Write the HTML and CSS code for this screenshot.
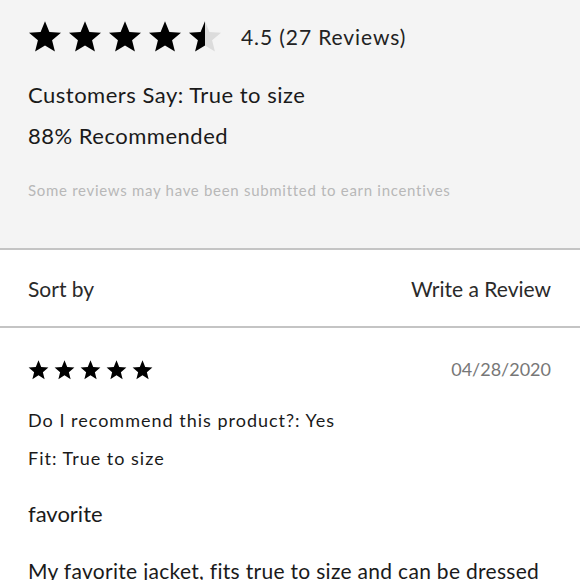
FILE: index.html
```html
<!DOCTYPE html>
<html lang="en">
<head>
    <meta charset="UTF-8">
    <meta name="viewport" content="width=device-width, initial-scale=1.0">
    <title>Reviews</title>
    <link rel="stylesheet" href="styles.css">
</head>
<body>
    <!-- summary -->
    <div id="summary">
        <div class="rating">
            <div class="stars big">
                <svg viewBox="0 0 24 24"><path d="M12 1.5l3.1 7.6 8.2.6-6.3 5.3 2 8-7-4.3-7 4.3 2-8L.7 9.7l8.2-.6z"/></svg>
                <svg viewBox="0 0 24 24"><path d="M12 1.5l3.1 7.6 8.2.6-6.3 5.3 2 8-7-4.3-7 4.3 2-8L.7 9.7l8.2-.6z"/></svg>
                <svg viewBox="0 0 24 24"><path d="M12 1.5l3.1 7.6 8.2.6-6.3 5.3 2 8-7-4.3-7 4.3 2-8L.7 9.7l8.2-.6z"/></svg>
                <svg viewBox="0 0 24 24"><path d="M12 1.5l3.1 7.6 8.2.6-6.3 5.3 2 8-7-4.3-7 4.3 2-8L.7 9.7l8.2-.6z"/></svg>
                <svg viewBox="0 0 24 24">
                    <path class="empty" d="M12 1.5l3.1 7.6 8.2.6-6.3 5.3 2 8-7-4.3-7 4.3 2-8L.7 9.7l8.2-.6z"/>
                    <path d="M12 1.5V18.7l-7 4.3 2-8L.7 9.7l8.2-.6z"/>
                </svg>
            </div>
            <span class="score">4.5 (27 Reviews)</span>
        </div>
        <div class="line first">Customers Say: True to size</div>
        <div class="line">88% Recommended</div>
        <div class="note">Some reviews may have been submitted to earn incentives</div>
    </div>

    <!-- sort bar -->
    <div id="toolbar">
        <span>Sort by</span>
        <span>Write a Review</span>
    </div>

    <!-- review -->
    <div class="review">
        <div class="review-head">
            <div class="stars small">
                <svg viewBox="0 0 24 24"><path d="M12 1.5l3.1 7.6 8.2.6-6.3 5.3 2 8-7-4.3-7 4.3 2-8L.7 9.7l8.2-.6z"/></svg>
                <svg viewBox="0 0 24 24"><path d="M12 1.5l3.1 7.6 8.2.6-6.3 5.3 2 8-7-4.3-7 4.3 2-8L.7 9.7l8.2-.6z"/></svg>
                <svg viewBox="0 0 24 24"><path d="M12 1.5l3.1 7.6 8.2.6-6.3 5.3 2 8-7-4.3-7 4.3 2-8L.7 9.7l8.2-.6z"/></svg>
                <svg viewBox="0 0 24 24"><path d="M12 1.5l3.1 7.6 8.2.6-6.3 5.3 2 8-7-4.3-7 4.3 2-8L.7 9.7l8.2-.6z"/></svg>
                <svg viewBox="0 0 24 24"><path d="M12 1.5l3.1 7.6 8.2.6-6.3 5.3 2 8-7-4.3-7 4.3 2-8L.7 9.7l8.2-.6z"/></svg>
            </div>
            <span class="date">04/28/2020</span>
        </div>
        <div class="meta first">Do I recommend this product?: Yes</div>
        <div class="meta">Fit: True to size</div>
        <h2>favorite</h2>
        <p>My favorite jacket, fits true to size and can be dressed</p>
    </div>
</body>
</html>
```
FILE: styles.css
```css
body {
    margin: 0;
    font-family: Lato, "Noto Sans", sans-serif;
    color: #1a1a1a;
    background-color: white;
    overflow: hidden;
}

#summary {
    background-color: #f4f4f4;
    padding: 19px 28px 0;
    height: 229px;
    border-bottom: 2px solid #c4c4c4;
}

.rating {
    display: flex;
    align-items: center;
    height: 34px;
}

.stars {
    display: flex;
}

.stars svg {
    fill: #000;
}

.stars .empty {
    fill: #dcdcdc;
}

.stars.big {
    gap: 6px;
}

.stars.big svg {
    width: 34px;
    height: 34px;
}

.stars.small {
    gap: 5px;
}

.stars.small svg {
    width: 21px;
    height: 21px;
}

.score {
    margin-left: 19px;
    font-size: 21px;
    letter-spacing: 0.9px;
    color: #222;
}

.line {
    font-size: 22px;
    line-height: 28px;
    letter-spacing: 0.5px;
    margin-top: 13px;
}

.line.first {
    margin-top: 28px;
}

.note {
    margin-top: 30px;
    font-size: 15px;
    line-height: 20px;
    letter-spacing: 0.7px;
    color: #b8b8b8;
}

#toolbar {
    display: flex;
    justify-content: space-between;
    align-items: center;
    height: 76px;
    padding: 0 29px 0 28px;
    font-size: 21px;
    color: #2a2a2a;
    border-bottom: 2px solid #c4c4c4;
}

.review {
    padding: 30px 29px 0 28px;
}

.review-head {
    display: flex;
    justify-content: space-between;
    align-items: center;
}

.date {
    font-size: 18px;
    color: #777;
}

.meta {
    font-size: 18px;
    line-height: 22px;
    letter-spacing: 1px;
    margin-top: 16px;
}

.meta.first {
    margin-top: 29px;
}

.review h2 {
    font-size: 22px;
    line-height: 28px;
    font-weight: normal;
    margin: 31px 0 0;
}

.review p {
    font-size: 21px;
    line-height: 28px;
    letter-spacing: 0.3px;
    margin: 29px 0 0;
    white-space: nowrap;
}
```
